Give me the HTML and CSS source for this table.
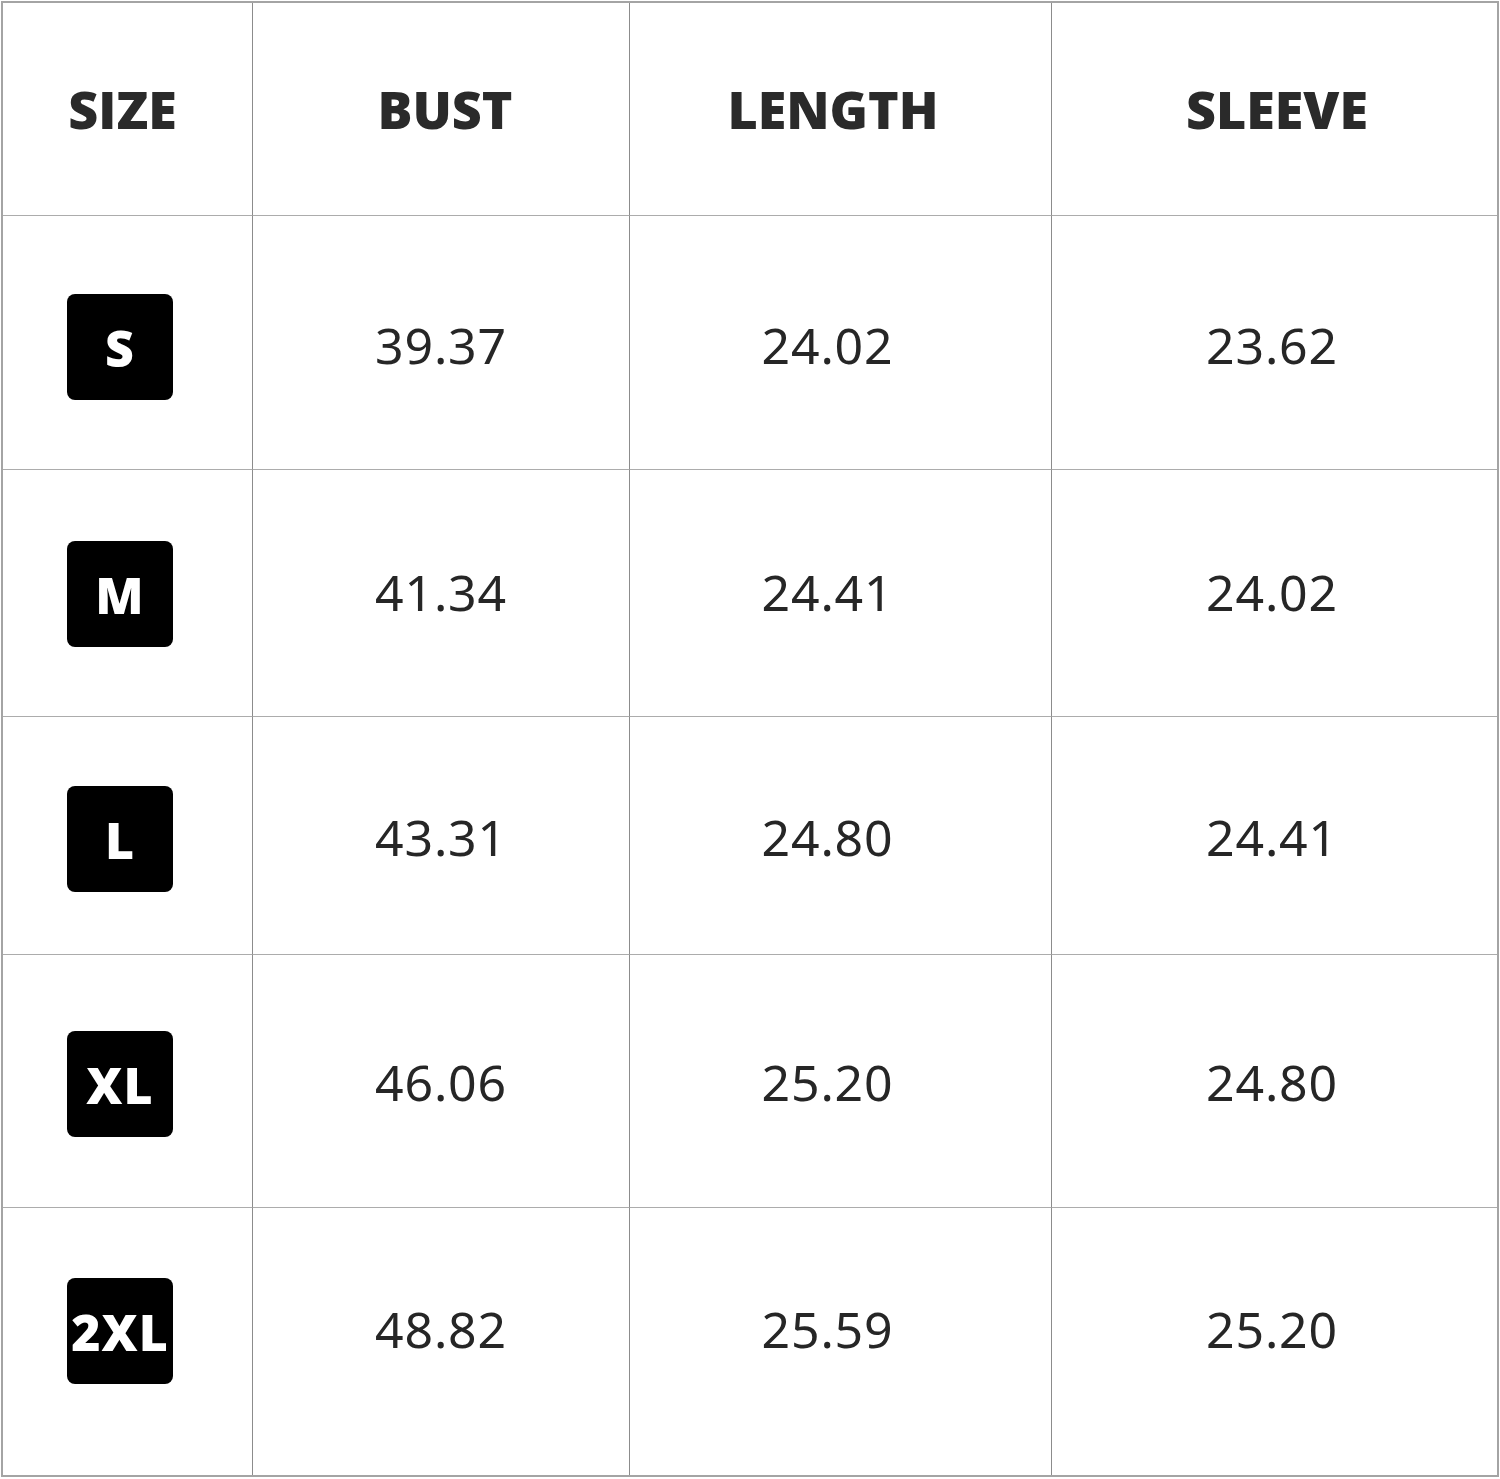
FILE: index.html
```html
<!DOCTYPE html>
<html lang="en">
<head>
<meta charset="utf-8">
<title>Size Chart</title>
<link rel="stylesheet" href="styles.css">
</head>
<body>
<div class="chart">
  <div class="cell head c1">SIZE</div>
  <div class="cell head c2">BUST</div>
  <div class="cell head c3">LENGTH</div>
  <div class="cell head c4 last">SLEEVE</div>

  <div class="cell c1 r1"><span class="badge">S</span></div>
  <div class="cell num c2 r1">39.37</div>
  <div class="cell num c3 r1">24.02</div>
  <div class="cell num c4 r1 last">23.62</div>

  <div class="cell c1 r2"><span class="badge">M</span></div>
  <div class="cell num c2 r2">41.34</div>
  <div class="cell num c3 r2">24.41</div>
  <div class="cell num c4 r2 last">24.02</div>

  <div class="cell c1 r3"><span class="badge">L</span></div>
  <div class="cell num c2 r3">43.31</div>
  <div class="cell num c3 r3">24.80</div>
  <div class="cell num c4 r3 last">24.41</div>

  <div class="cell c1 r4"><span class="badge">XL</span></div>
  <div class="cell num c2 r4">46.06</div>
  <div class="cell num c3 r4">25.20</div>
  <div class="cell num c4 r4 last">24.80</div>

  <div class="cell c1 r5 bottom"><span class="badge">2XL</span></div>
  <div class="cell num c2 r5 bottom">48.82</div>
  <div class="cell num c3 r5 bottom">25.59</div>
  <div class="cell num c4 r5 bottom last">25.20</div>
</div>
</body>
</html>
```
FILE: styles.css
```css
* { box-sizing: border-box; }
html, body { margin: 0; padding: 0; background: #ffffff; }
body { padding: 1px 0 0 1px; }

.chart {
  width: 1498px;
  height: 1476px;
  border: 2px solid #a4a4a4;
  display: grid;
  grid-template-columns: 250px 377px 422px 445px;
  grid-template-rows: 213px 254px 247px 238px 253px 267px;
  background: #fff;
}

.cell {
  display: flex;
  align-items: center;
  justify-content: center;
  border-right: 1px solid #8c8c8c;
  border-bottom: 1px solid #acacac;
  color: #2a2a2a;
}
.cell.last { border-right: none; }
.cell.bottom { border-bottom: none; }

.head {
  font-family: "Open Sans", "Liberation Sans", sans-serif;
  font-weight: 800;
  font-size: 52px;
  letter-spacing: 0;
  padding-bottom: 1px;
}
.head.c1 { padding-right: 10px; }
.head.c2 { padding-left: 8px; }
.head.c3 { padding-right: 15px; }
.head.c4 { padding-left: 5px; }

.num {
  font-family: "Noto Sans", "Open Sans", sans-serif;
  font-weight: 400;
  font-size: 50px;
  color: #262626;
  letter-spacing: 0.8px;
}
.num.c3 { padding-right: 26px; }
.num.c4 { padding-right: 5px; }

.c1 { padding-right: 15px; }

.r1 { padding-top: 9px; }
.r2 { padding-top: 2px; }
.r3 { padding-top: 7px; }
.r4 { padding-top: 6px; }
.r5 { padding-bottom: 21px; }

.num.r1 { padding-top: 5px; }
.num.r2 { padding-top: 0; padding-bottom: 2px; }
.num.r3 { padding-top: 3px; }
.num.r4 { padding-top: 2px; }
.num.r5 { padding-bottom: 25px; }

.badge {
  width: 106px;
  height: 106px;
  border-radius: 8px;
  background: #000;
  color: #fff;
  display: flex;
  align-items: center;
  justify-content: center;
  font-family: "Open Sans", "Liberation Sans", sans-serif;
  font-weight: 800;
  font-size: 50px;
  letter-spacing: 1px;
  padding-top: 2px;
}
```
